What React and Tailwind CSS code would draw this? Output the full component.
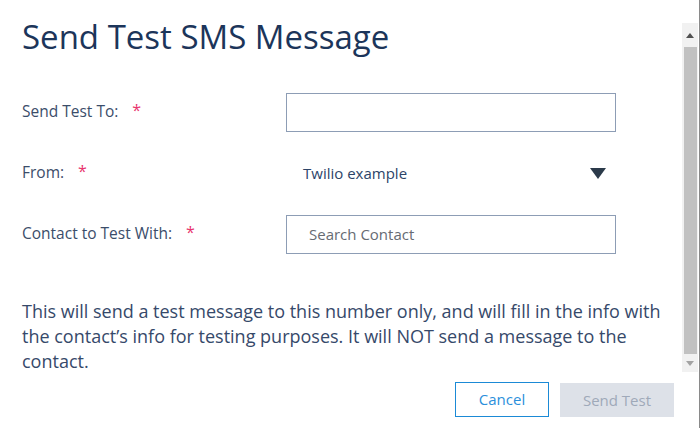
import React from "react";

function Row({ label, children }) {
  return (
    <div className="flex items-center h-[38px]">
      <div className="w-[264px] flex items-center text-[15.5px] text-[#3b4d6a]">
        <span>{label}</span>
        <span className="ml-[14px] text-[#e8356d] text-[16px] leading-none mt-[-4px]">*</span>
      </div>
      {children}
    </div>
  );
}

export default function App() {
  return (
    <div
      className="w-[700px] h-[428px] bg-white flex overflow-hidden"
      style={{ fontFamily: '"Open Sans", "Noto Sans", sans-serif' }}
    >
      <div className="flex-1 flex flex-col">
        <div className="pl-[22px] pt-[14px] pr-[20px]">
          <h1 className="text-[33px] leading-[46px] text-[#1c355a] font-normal">Send Test SMS Message</h1>
          <div className="mt-[33px] flex flex-col gap-[23px]">
            <Row label="Send Test To:">
              <div className="w-[330px] h-[39px] border border-[#8d9db5] bg-white"></div>
            </Row>
            <Row label="From:">
              <div className="w-[330px] h-[38px] flex items-center justify-between pl-[17px] pr-[10px] text-[15px] text-[#2d4468]">
                <span>Twilio example</span>
                <svg width="16" height="11" viewBox="0 0 16 11">
                  <polygon points="0,0 16,0 8,11" fill="#2b3a4a" />
                </svg>
              </div>
            </Row>
            <Row label="Contact to Test With:">
              <div className="w-[330px] h-[39px] border border-[#8d9db5] bg-white flex items-center pl-[22px] text-[15px] text-[#666b73]">
                Search Contact
              </div>
            </Row>
          </div>
          <p className="mt-[46px] text-[18px] leading-[25px] text-[#36496a]">
            This will send a test message to this number only, and will fill in the info with the contact’s info for testing purposes. It will NOT send a message to the contact.
          </p>
        </div>
        <div className="mt-auto mb-[11px] flex justify-end gap-[11px] pr-[8px]">
          <button className="w-[94px] h-[35px] border border-[#1b8ad6] text-[#2b8fdb] text-[15px] bg-white">Cancel</button>
          <button className="w-[114px] h-[34px] mt-[1px] bg-[#dde1e8] text-[#9fa9b9] text-[15px]">Send Test</button>
        </div>
      </div>
      <div className="w-[17px] flex flex-col">
        <div className="h-[23px]"></div>
        <div className="h-[349px] w-[16px] bg-[#f1f1f1] flex flex-col items-center">
          <div className="h-[24px] flex items-center justify-center">
            <svg width="8" height="5" viewBox="0 0 8 5"><polygon points="4,0 8,5 0,5" fill="#505050" /></svg>
          </div>
          <div className="w-[13px] ml-[1px] h-[307px] bg-[#c1c1c1]"></div>
          <div className="flex-1 flex items-center justify-center">
            <svg width="8" height="5" viewBox="0 0 8 5"><polygon points="0,0 8,0 4,5" fill="#a3a3a3" /></svg>
          </div>
        </div>
      </div>
      <div className="w-px bg-[#8a8a8a]"></div>
    </div>
  );
}
